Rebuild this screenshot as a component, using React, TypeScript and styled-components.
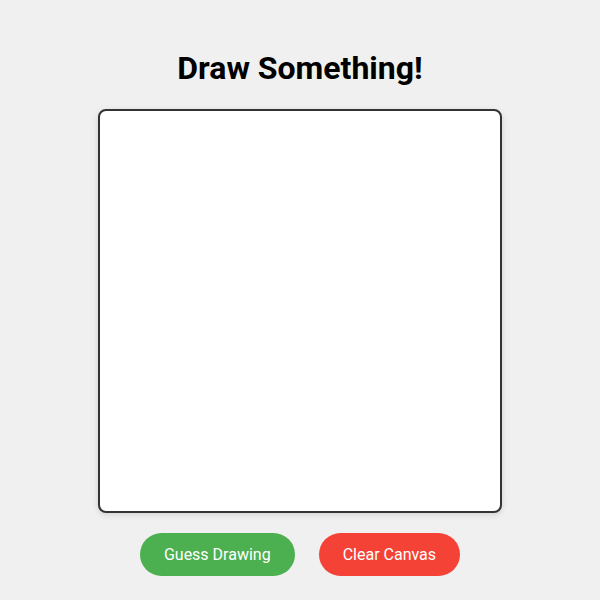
import * as React from 'react'
import styled, { createGlobalStyle } from 'styled-components'

const GlobalStyle = createGlobalStyle`
  body {
    margin: 0;
    background: #f0f0f0;
    font-family: Roboto, "Liberation Sans", sans-serif;
  }
`

const Page = styled.div`
  display: flex;
  flex-direction: column;
  align-items: center;
  padding-top: 50px;
`

const Title = styled.h1`
  margin: 0 0 22px;
  font-size: 32px;
  line-height: 37px;
  font-weight: 700;
  color: #000;
`

const Board = styled.canvas`
  display: block;
  width: 400px;
  height: 400px;
  background: #fff;
  border: 2px solid #333;
  border-radius: 8px;
  box-shadow: 0 2px 6px rgba(0, 0, 0, 0.12);
`

const Controls = styled.div`
  display: flex;
  gap: 24px;
  margin-top: 20px;
`

const Button = styled.button<{ $tone: 'green' | 'red' }>`
  border: none;
  border-radius: 22px;
  padding: 12px 24px;
  font-family: Roboto, "Liberation Sans", sans-serif;
  font-size: 16px;
  line-height: 19px;
  color: #fff;
  cursor: pointer;
  background: ${(p) => (p.$tone === 'green' ? '#4caf50' : '#f44336')};
`

export default function App() {
  const ref = React.useRef<HTMLCanvasElement>(null)

  const clear = () => {
    const ctx = ref.current?.getContext('2d')
    if (ctx) ctx.clearRect(0, 0, 400, 400)
  }

  return (
    <>
      <GlobalStyle />
      <Page>
        <Title>Draw Something!</Title>
        <Board ref={ref} width={400} height={400} />
        <Controls>
          <Button $tone="green">Guess Drawing</Button>
          <Button $tone="red" onClick={clear}>
            Clear Canvas
          </Button>
        </Controls>
      </Page>
    </>
  )
}
